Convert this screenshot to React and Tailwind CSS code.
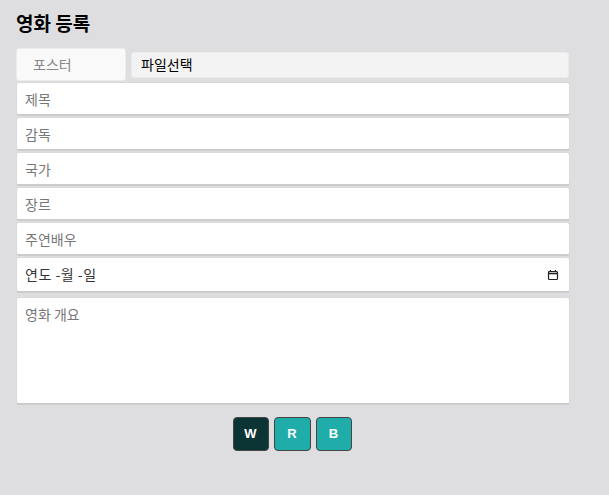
import React from 'react';

const fieldClass =
  'block w-full h-[34px] mb-px bg-white rounded-[3px] border border-[#dadada] border-b-2 border-b-[#cccccc] px-2 text-[14px] text-[#333] placeholder:text-[#777] outline-none';

const btnClass =
  'h-[34px] rounded-[4px] border border-[#444] text-white text-[13px] font-bold font-["Liberation_Sans",Arial,sans-serif]';

const CalendarIcon = () => (
  <svg width="12" height="12" viewBox="0 0 12 12" fill="none" stroke="#222" strokeWidth="1.2">
    <rect x="1.5" y="2.5" width="9" height="8" rx="1" />
    <path d="M1.5 4.5h9" strokeWidth="1.6" />
    <path d="M3.5 1v2M8.5 1v2" />
  </svg>
);

const App = () => {
  return (
    <div
      className="min-h-screen w-full bg-[#dedee0] px-4 pt-[9px]"
      style={{ fontFamily: '"Noto Sans CJK KR", "Noto Sans", sans-serif' }}
    >
      <h2 className="text-[19px] font-bold leading-[28px] text-black">영화 등록</h2>

      <form className="mt-[11px] w-[554px]">
        {/* 포스터 */}
        <div className="flex items-center h-[33px] mb-px">
          <label className="w-[110px] h-[33px] flex items-center pl-[16px] bg-[#f9f9f9] rounded-[3px] border border-[#ececec] text-[14px] text-[#888]">
            포스터
          </label>
          <div className="ml-[5px] flex-1 mr-px h-[26px] flex items-center pl-[9px] bg-[#f3f3f3] rounded-[3px] border border-[#ebebeb] text-[14px] text-black">
            파일선택
          </div>
        </div>

        <input type="text" placeholder="제목" className={fieldClass} />
        <input type="text" placeholder="감독" className={fieldClass} />
        <input type="text" placeholder="국가" className={fieldClass} />
        <input type="text" placeholder="장르" className={fieldClass} />
        <input type="text" placeholder="주연배우" className={fieldClass} />

        {/* 날짜 */}
        <div className="flex items-center justify-between w-full h-[36px] bg-white rounded-[3px] border border-[#dadada] border-b-2 border-b-[#cccccc] pl-2 pr-[10px] text-[14px] text-[#333]">
          <span className="tracking-[0.5px]">연도 -월 -일</span>
          <CalendarIcon />
        </div>

        <textarea
          placeholder="영화 개요"
          className="block w-full h-[108px] mt-[4px] bg-white rounded-[3px] border border-[#dadada] border-b-2 border-b-[#cccccc] px-2 py-[6px] text-[14px] text-[#333] placeholder:text-[#777] outline-none resize-none"
        />

        <div className="flex justify-center gap-[5px] mt-[12px] pr-[2px]">
          <button type="button" className={`${btnClass} w-[36px] bg-[#0b3535]`}>
            W
          </button>
          <button type="button" className={`${btnClass} w-[37px] bg-[#20adaa]`}>
            R
          </button>
          <button type="button" className={`${btnClass} w-[36px] bg-[#20adaa]`}>
            B
          </button>
        </div>
      </form>
    </div>
  );
};

export default App;
